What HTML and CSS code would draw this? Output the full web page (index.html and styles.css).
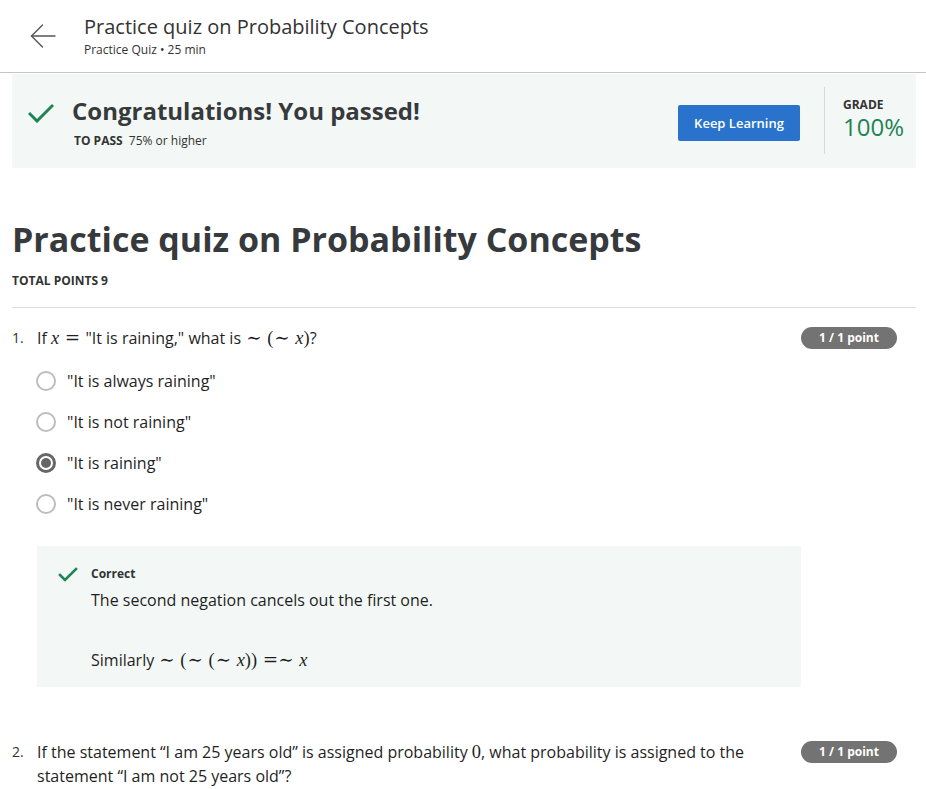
FILE: index.html
```html
<!DOCTYPE html>
<html lang="en">
<head>
<meta charset="utf-8">
<title>Practice quiz on Probability Concepts</title>
<link rel="stylesheet" href="styles.css">
</head>
<body>
<header class="topbar">
  <a class="back" href="#" aria-label="Back">
    <svg width="26" height="24" viewBox="0 0 26 24" fill="none" stroke="#555" stroke-width="1.4" stroke-linecap="round">
      <path d="M1.5 12H25"/>
      <path d="M12.5 1L1.5 12L12.5 23"/>
    </svg>
  </a>
  <div class="topbar-titles">
    <div class="topbar-title">Practice quiz on Probability Concepts</div>
    <div class="topbar-sub">Practice Quiz • 25 min</div>
  </div>
</header>

<main class="page">
  <section class="banner">
    <svg class="banner-check" width="26" height="20" viewBox="0 0 26 20" fill="none" stroke="#1f8354" stroke-width="3" stroke-linecap="square">
      <path d="M2 11L9 18L24 3"/>
    </svg>
    <div class="banner-text">
      <div class="banner-title">Congratulations! You passed!</div>
      <div class="banner-pass"><b>TO PASS</b> 75% or higher</div>
    </div>
    <button class="btn-primary">Keep Learning</button>
    <div class="banner-divider"></div>
    <div class="grade">
      <div class="grade-label">GRADE</div>
      <div class="grade-value">100%</div>
    </div>
  </section>

  <h1 class="quiz-title">Practice quiz on Probability Concepts</h1>
  <div class="total-points">TOTAL POINTS 9</div>
  <hr class="rule">

  <section class="question">
    <div class="q-head">
      <span class="q-num">1.</span>
      <div class="q-text">If <span class="m"><i>x</i> <span class="op">=</span></span> "It is raining," what is <span class="m"><span class="op">∼</span> (<span class="op">∼</span> <i>x</i>)</span>?</div>
      <span class="badge">1 / 1 point</span>
    </div>
    <ul class="options">
      <li class="option"><span class="radio"></span>"It is always raining"</li>
      <li class="option"><span class="radio"></span>"It is not raining"</li>
      <li class="option"><span class="radio checked"></span>"It is raining"</li>
      <li class="option"><span class="radio"></span>"It is never raining"</li>
    </ul>
    <div class="feedback">
      <svg class="fb-check" width="20" height="16" viewBox="0 0 20 16" fill="none" stroke="#1f8354" stroke-width="2.6" stroke-linecap="square">
        <path d="M2 9L7 14L18 3"/>
      </svg>
      <div class="fb-body">
        <div class="fb-label">Correct</div>
        <p class="fb-text">The second negation cancels out the first one.</p>
        <p class="fb-text">Similarly <span class="m"><span class="op">∼</span> (<span class="op">∼</span> (<span class="op">∼</span> <i>x</i>)) <span class="op">=∼</span> <i>x</i></span></p>
      </div>
    </div>
  </section>

  <section class="question q2">
    <div class="q-head">
      <span class="q-num">2.</span>
      <div class="q-text">If the statement “I am 25 years old” is assigned probability <span class="m">0</span>, what probability is assigned to the statement “I am not 25 years old”?</div>
      <span class="badge">1 / 1 point</span>
    </div>
  </section>
</main>
</body>
</html>
```

FILE: styles.css
```css
* { box-sizing: border-box; }
html, body { margin: 0; padding: 0; background: #fff; }
body {
  font-family: "Open Sans", "Noto Sans", sans-serif;
  color: #1f1f1f;
  font-size: 16px;
}

.topbar {
  height: 73px;
  border-bottom: 1px solid #c6c6c6;
  display: flex;
  align-items: flex-start;
}
.back {
  display: block;
  margin: 24px 0 0 30px;
  width: 26px;
  height: 24px;
}
.back svg { display: block; }
.topbar-titles { margin-left: 28px; padding-top: 13px; }
.topbar-title { font-size: 20px; line-height: 28px; color: #333; }
.topbar-sub { font-size: 12px; line-height: 16px; color: #333; margin-top: 1px; }

.page { padding: 0 10px 0 12px; }

.banner {
  margin-top: 1px;
  height: 94px;
  background: #f3f8f6;
  display: flex;
  align-items: flex-start;
}
.banner-check { margin: 29px 0 0 16px; flex: none; }
.banner-text { margin-left: 18px; padding-top: 21px; flex: 1; }
.banner-title { font-size: 24px; line-height: 32px; font-weight: 700; color: #373a3c; }
.banner-pass { margin-top: 6px; margin-left: 2px; font-size: 12px; line-height: 16px; color: #333; }
.banner-pass b { font-weight: 700; margin-right: 3px; }
.btn-primary {
  margin-top: 31px;
  width: 122px;
  height: 36px;
  border: 0;
  border-radius: 2px;
  background: #2a73cc;
  color: #fff;
  font-family: inherit;
  font-size: 13px;
  font-weight: 600;
  padding: 0;
}
.banner-divider { width: 1px; height: 67px; background: #d9d9d9; margin: 13px 0 0 24px; }
.grade { margin-left: 18px; padding-top: 23px; width: 73px; }
.grade-label { font-size: 12px; line-height: 16px; font-weight: 700; color: #333; }
.grade-value { font-size: 24px; line-height: 28px; color: #1f8354; }

.quiz-title {
  margin: 48px 0 0;
  font-size: 34px;
  line-height: 46px;
  font-weight: 700;
  color: #373a3c;
}
.total-points { margin-top: 11px; font-size: 12px; line-height: 16px; font-weight: 700; color: #333; }
.rule { margin: 18px 0 0; border: 0; border-top: 1px solid #dcdcdc; }

.question { padding-top: 18px; }
.q2 { padding-top: 53px; }
.q-head { display: flex; align-items: flex-start; }
.q-num { width: 25px; flex: none; font-size: 14px; line-height: 24px; color: #333; }
.q-text { flex: 1; line-height: 24px; padding-right: 20px; }
.badge {
  flex: none;
  margin: 1px 19px 0 0;
  width: 96px;
  height: 22px;
  border-radius: 11px;
  background: #737373;
  color: #fff;
  font-size: 12px;
  font-weight: 700;
  line-height: 22px;
  text-align: center;
}

.m { font-family: "Liberation Serif", "DejaVu Serif", serif; font-size: 1.15em; line-height: 1; }
.m i { font-style: italic; }
.op { font-family: "DejaVu Serif", serif; font-size: 1em; padding: 0 1px; }

.options { list-style: none; margin: 19px 0 0; padding: 0 0 0 24px; }
.option { display: flex; align-items: center; height: 24px; margin-bottom: 17px; line-height: 24px; }
.option:last-child { margin-bottom: 0; }
.radio {
  width: 20px; height: 20px;
  border: 2px solid #bdbdbd;
  border-radius: 50%;
  margin-right: 11px;
  flex: none;
  position: relative;
}
.radio.checked { border: 3px solid #666; }
.radio.checked::after {
  content: "";
  position: absolute;
  left: 2px; top: 2px;
  width: 10px; height: 10px;
  border-radius: 50%;
  background: #666;
}

.feedback {
  margin: 30px 0 0 25px;
  width: 764px;
  background: #f3f8f6;
  display: flex;
  align-items: flex-start;
  padding: 20px 0 15px 21px;
}
.fb-check { margin-top: 0; flex: none; }
.fb-body { margin-left: 13px; }
.fb-label { font-size: 12px; line-height: 16px; font-weight: 700; color: #333; }
.fb-text { margin: 6px 0 0; line-height: 24px; }
.fb-text + .fb-text { margin-top: 36px; }
```
